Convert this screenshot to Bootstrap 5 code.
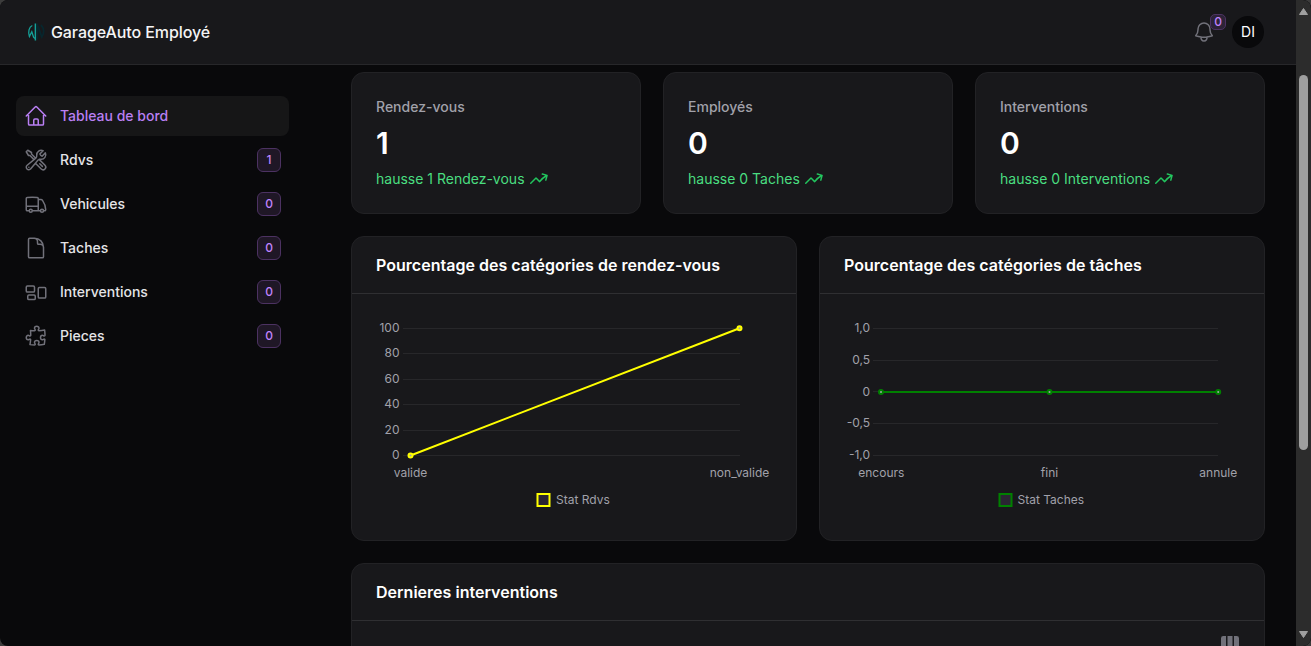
<!DOCTYPE html>
<html lang="fr" data-bs-theme="dark">
<head>
<meta charset="utf-8">
<meta name="viewport" content="width=device-width, initial-scale=1">
<title>Tableau de bord - GarageAuto Employé</title>
<link rel="stylesheet" href="https://cdn.jsdelivr.net/npm/bootstrap@5.3.0/dist/css/bootstrap.min.css">
<style>
  html { background: #3c3c3c; }
  body { font-family: Inter, "Liberation Sans", sans-serif; font-size: 14px; line-height: 20px; background: #3c3c3c; color: #fff; }
  .app-window { background: #09090b; border-radius: 8px; }
  .topbar { height: 65px; background: #18181b; border-bottom: 1px solid #27272a; padding: 0 32px 0 27px; }
  .brand { font-size: 16px; line-height: 24px; font-weight: 500; letter-spacing: -.09px; color: #f4f4f5; gap: 6px; }
  .bell { width: 24px; height: 24px; color: #71717a; margin-right: 16px; }
  .bell-count { position: absolute; left: 18px; top: -6px; width: 16px; height: 16px; border-radius: 5px; font-size: 12px; line-height: 14px; }
  .count { background: #1f1726; border: 1px solid #4c3262; color: #c084fc; font-weight: 500; text-align: center; }
  .bell .count { background: #2d2338; }
  .avatar { width: 32px; height: 32px; background: #09090b; font-weight: 400; }
  .sidebar { width: 351px; padding: 31px 62px 0 16px; }
  .sidebar .nav { gap: 4px; }
  .sidebar .nav-link { height: 40px; padding: 0 8px; gap: 12px; border-radius: 8px; color: #e4e4e7; font-weight: 500; }
  .sidebar .nav-link svg { color: #71717a; }
  .sidebar .nav-link.active { background: #161617; color: #b97ff3; }
  .sidebar .nav-link.active svg { color: #b97ff3; }
  .sidebar .count { width: 24px; height: 24px; border-radius: 6px; font-size: 12px; line-height: 22px; }
  .icon-line { width: 24px; height: 24px; fill: none; stroke: currentColor; stroke-width: 1.5; stroke-linecap: round; stroke-linejoin: round; flex: none; }
  .content { padding: 7px 31px 0 0; gap: 22px; }
  .stack { gap: 22px; }
  .panel { background: #18181b; border: 1px solid #222225; border-radius: 13px; }
  .stat { height: 142px; padding: 24px; }
  .stat-label { color: #a1a1aa; font-weight: 500; }
  .stat-value { font-size: 30px; line-height: 36px; font-weight: 600; letter-spacing: -.75px; }
  .stat-trend { color: #4ade80; gap: 4px; }
  .stat-trend svg { width: 20px; height: 20px; fill: #22c55e; }
  .panel-title { height: 57px; padding: 0 24px; font-size: 16px; line-height: 24px; font-weight: 600; letter-spacing: .02px; border-bottom: 1px solid #2f2f32; }
  .chart-panel { height: 305px; }
  .chart { width: 444px; height: 246px; font-size: 12px; }
  .chart text { fill: #a1a1aa; }
  .chart .end { text-anchor: end; }
  .chart .mid { text-anchor: middle; }
  .grid-lines { stroke: #27272a; stroke-width: 1; shape-rendering: crispEdges; }
  .tools { padding: 12px 24px; color: #71717a; }
  .scroll-track { width: 15px; background: #2c2c2c; border-radius: 0 8px 8px 0; padding: 8px 3px 8px 3px; }
  .scroll-thumb { width: 9px; height: 375px; margin-top: 60px; background: #9f9f9f; border-radius: 5px; }
</style>
<script src="https://cdn.jsdelivr.net/npm/bootstrap@5.3.0/dist/js/bootstrap.bundle.min.js"></script>
</head>
<body class="vh-100 overflow-hidden">
<div class="app-window d-flex vh-100 overflow-hidden">
  <div class="flex-grow-1 d-flex flex-column overflow-hidden">
    <header class="topbar d-flex align-items-center justify-content-between flex-shrink-0">
      <div class="brand d-flex align-items-center">
        <svg width="18" height="18" viewBox="0 0 18 18" fill="none">
          <path d="M5.300 2.500C2 3.800.8 9 2.400 13.600L4.800 8.800L6.600 14.300L8.200 15.500" stroke="#14a098" stroke-width="1.300"/>
          <path d="M8.400.4v17" stroke="#14a098" stroke-width="1.500"/>
          <path d="M10.400.6V16.500M11 3l3.800 11c2.800-4 2.400-9-.9-12" stroke="#07262d" stroke-width="1.800"/>
        </svg>
        <span>GarageAuto Employé</span>
      </div>
      <div class="d-flex align-items-center">
        <div class="bell position-relative">
          <svg class="icon-line d-block" viewBox="0 0 24 24"><path d="M14.857 17.082a23.848 23.848 0 005.454-1.31A8.967 8.967 0 0118 9.750v-.7V9A6 6 0 006 9v.75a8.967 8.967 0 01-2.312 6.022c1.733.64 3.560 1.085 5.455 1.310m5.714 0a24.255 24.255 0 01-5.714 0m5.714 0a3 3 0 11-5.714 0"/></svg>
          <span class="bell-count count">0</span>
        </div>
        <div class="avatar rounded-circle d-flex align-items-center justify-content-center">DI</div>
      </div>
    </header>
    <div class="d-flex flex-grow-1 overflow-hidden">
      <aside class="sidebar flex-shrink-0">
        <nav class="nav flex-column">
          <a class="nav-link active d-flex align-items-center" href="#">
            <svg class="icon-line" viewBox="0 0 24 24"><path d="M2.250 12l8.954-8.955c.44-.439 1.152-.439 1.591 0L21.750 12M4.500 9.750v10.125c0 .621.504 1.125 1.125 1.125H9.750v-4.875c0-.621.504-1.125 1.125-1.125h2.250c.621 0 1.125.504 1.125 1.125V21h4.125c.621 0 1.125-.504 1.125-1.125V9.750M8.250 21h8.250"/></svg>
            <span class="flex-grow-1">Tableau de bord</span>
          </a>
          <a class="nav-link d-flex align-items-center" href="#">
            <svg class="icon-line" viewBox="0 0 24 24"><path d="M11.420 15.170L17.250 21A2.652 2.652 0 0021 17.250l-5.877-5.877M11.420 15.170l2.496-3.030c.317-.384.74-.626 1.208-.766M11.420 15.170l-4.655 5.653a2.548 2.548 0 11-3.586-3.586l6.837-5.630m5.108-.233c.55-.164 1.163-.188 1.743-.14a4.500 4.500 0 004.486-6.336l-3.276 3.277a3.004 3.004 0 01-2.250-2.250l3.276-3.276a4.500 4.500 0 00-6.336 4.486c.091 1.076-.071 2.264-.904 2.950l-.102.085m-1.745 1.437L5.909 7.500H4.500L2.250 3.750l1.500-1.500L7.500 4.500v1.409l4.260 4.260m-1.745 1.437l1.745-1.437m6.615 8.206L15.750 15.750M4.867 19.125h.008v.008h-.008v-.008z"/></svg>
            <span class="flex-grow-1">Rdvs</span><span class="count">1</span>
          </a>
          <a class="nav-link d-flex align-items-center" href="#">
            <svg class="icon-line" viewBox="0 0 24 24"><path d="M8.250 18.750a1.500 1.500 0 01-3 0m3 0a1.500 1.500 0 00-3 0m3 0h6m-9 0H3.375a1.125 1.125 0 01-1.125-1.125V14.250m17.250 4.500a1.500 1.500 0 01-3 0m3 0a1.500 1.500 0 00-3 0m3 0h1.125c.621 0 1.129-.504 1.090-1.124a17.902 17.902 0 00-3.213-9.193 2.056 2.056 0 00-1.580-.86H14.250M16.500 18.750h-2.250m0-11.177v-.958c0-.568-.422-1.048-.987-1.106a48.554 48.554 0 00-10.026 0 1.106 1.106 0 00-.987 1.106v7.635m12-6.677v6.677m0 4.500v-4.500m0 0h-12"/></svg>
            <span class="flex-grow-1">Vehicules</span><span class="count">0</span>
          </a>
          <a class="nav-link d-flex align-items-center" href="#">
            <svg class="icon-line" viewBox="0 0 24 24"><path d="M19.500 14.250v-2.625a3.375 3.375 0 00-3.375-3.375h-1.500A1.125 1.125 0 0113.500 7.125v-1.500a3.375 3.375 0 00-3.375-3.375H8.250m2.250 0H5.625c-.621 0-1.125.504-1.125 1.125v17.250c0 .621.504 1.125 1.125 1.125h12.750c.621 0 1.125-.504 1.125-1.125V11.250a9 9 0 00-9-9z"/></svg>
            <span class="flex-grow-1">Taches</span><span class="count">0</span>
          </a>
          <a class="nav-link d-flex align-items-center" href="#">
            <svg class="icon-line" viewBox="0 0 24 24"><path d="M2.250 7.125C2.250 6.504 2.754 6 3.375 6h6c.621 0 1.125.504 1.125 1.125v3.750c0 .621-.504 1.125-1.125 1.125h-6a1.125 1.125 0 01-1.125-1.125v-3.750zM14.250 8.625c0-.621.504-1.125 1.125-1.125h5.250c.621 0 1.125.504 1.125 1.125v8.250c0 .621-.504 1.125-1.125 1.125h-5.250a1.125 1.125 0 01-1.125-1.125v-8.250zM3.750 16.125c0-.621.504-1.125 1.125-1.125h5.250c.621 0 1.125.504 1.125 1.125v2.250c0 .621-.504 1.125-1.125 1.125h-5.250a1.125 1.125 0 01-1.125-1.125v-2.250z"/></svg>
            <span class="flex-grow-1">Interventions</span><span class="count">0</span>
          </a>
          <a class="nav-link d-flex align-items-center" href="#">
            <svg class="icon-line" viewBox="0 0 24 24"><path d="M14.250 6.087c0-.355.186-.676.401-.959.221-.29.349-.634.349-1.003 0-1.036-1.007-1.875-2.250-1.875s-2.250.84-2.250 1.875c0 .369.128.713.349 1.003.215.283.401.604.401.959v0a.64.64 0 01-.657.643 48.390 48.390 0 01-4.163-.3c.186 1.613.293 3.250.315 4.907a.656.656 0 01-.658.663v0c-.355 0-.676-.186-.959-.401a1.647 1.647 0 00-1.003-.349c-1.036 0-1.875 1.007-1.875 2.250s.84 2.250 1.875 2.250c.369 0 .713-.128 1.003-.349.283-.215.604-.401.959-.401v0c.31 0 .555.26.532.57a48.039 48.039 0 01-.642 5.056c1.518.19 3.058.309 4.616.354a.64.64 0 00.657-.643v0c0-.355-.186-.676-.401-.959a1.647 1.647 0 01-.349-1.003c0-1.035 1.008-1.875 2.250-1.875 1.243 0 2.250.84 2.250 1.875 0 .369-.128.713-.349 1.003-.215.283-.4.604-.4.959v0c0 .333.277.599.61.58a48.100 48.100 0 005.427-.63 48.050 48.050 0 00.582-4.717.532.532 0 00-.533-.57v0c-.355 0-.676.186-.959.401-.29.221-.634.349-1.003.349-1.035 0-1.875-1.007-1.875-2.250s.84-2.250 1.875-2.250c.37 0 .713.128 1.003.349.283.215.604.401.96.401v0a.656.656 0 00.658-.663 48.422 48.422 0 00-.37-5.360c-1.886.342-3.810.574-5.766.689a.578.578 0 01-.61-.58v0z"/></svg>
            <span class="flex-grow-1">Pieces</span><span class="count">0</span>
          </a>
        </nav>
      </aside>
      <main class="content flex-grow-1 d-flex flex-column">
        <svg class="d-none"><symbol id="trend" viewBox="0 0 20 20"><path d="M12.577 4.878a.75.75 0 01.919-.53l4.780 1.281a.75.75 0 01.531.919l-1.281 4.780a.75.75 0 01-1.449-.387l.81-3.022a19.407 19.407 0 00-5.594 5.203.75.75 0 01-1.139.093L7 10.060l-4.720 4.720a.75.75 0 01-1.060-1.061l5.250-5.250a.75.75 0 011.060 0l3.074 3.073a20.923 20.923 0 015.545-4.931l-3.042-.815a.75.75 0 01-.53-.919z"/></symbol></svg>
        <section class="stack d-flex flex-shrink-0">
          <div class="panel stat flex-fill w-100 d-flex flex-column gap-2">
            <div class="stat-label">Rendez-vous</div>
            <div class="stat-value">1</div>
            <div class="stat-trend d-flex align-items-center"><span>hausse 1 Rendez-vous</span><svg><use href="#trend"/></svg></div>
          </div>
          <div class="panel stat flex-fill w-100 d-flex flex-column gap-2">
            <div class="stat-label">Employés</div>
            <div class="stat-value">0</div>
            <div class="stat-trend d-flex align-items-center"><span>hausse 0 Taches</span><svg><use href="#trend"/></svg></div>
          </div>
          <div class="panel stat flex-fill w-100 d-flex flex-column gap-2">
            <div class="stat-label">Interventions</div>
            <div class="stat-value">0</div>
            <div class="stat-trend d-flex align-items-center"><span>hausse 0 Interventions</span><svg><use href="#trend"/></svg></div>
          </div>
        </section>
        <section class="stack d-flex flex-shrink-0">
          <div class="panel chart-panel flex-fill w-100">
            <div class="panel-title d-flex align-items-center">Pourcentage des catégories de rendez-vous</div>
            <svg class="chart d-block" viewBox="0 0 444 246">
              <path class="grid-lines" d="M51 34.500H388M51 59.500H388M51 85.500H388M51 110.500H388M51 136.500H388M51 161.500H388"/>
              <g class="end"><text x="47.500" y="38">100</text><text x="47.500" y="63">80</text><text x="47.500" y="89">60</text><text x="47.500" y="114">40</text><text x="47.500" y="140">20</text><text x="47.500" y="165">0</text></g>
              <g class="mid"><text x="58.500" y="183">valide</text><text x="387.500" y="183">non_valide</text></g>
              <path d="M58.500 161.500L387.500 34.200" stroke="#ff0" stroke-width="2"/>
              <g fill="#a1a1aa" stroke="#ff0" stroke-width="2"><circle cx="58.500" cy="161.500" r="2"/><circle cx="387.500" cy="34.200" r="2"/></g>
              <rect x="185.500" y="200" width="12" height="12" fill="#2a2433" stroke="#ff0" stroke-width="2"/>
              <text x="204" y="210">Stat Rdvs</text>
            </svg>
          </div>
          <div class="panel chart-panel flex-fill w-100">
            <div class="panel-title d-flex align-items-center">Pourcentage des catégories de tâches</div>
            <svg class="chart d-block" viewBox="0 0 444 246">
              <path class="grid-lines" d="M53 34.500H398M53 66.500H398M53 97.500H398M53 129.500H398M53 161.500H398"/>
              <g class="end"><text x="50" y="38">1,0</text><text x="50" y="70">0,5</text><text x="50" y="102">0</text><text x="50" y="133">-0,5</text><text x="50" y="165">-1,0</text></g>
              <g class="mid"><text x="61.300" y="183">encours</text><text x="229.500" y="183">fini</text><text x="398.300" y="183">annule</text></g>
              <path d="M61 98H398" stroke="#008000" stroke-width="2"/>
              <g fill="#a1a1aa" stroke="#008000" stroke-width="2"><circle cx="61" cy="98" r="2"/><circle cx="229.500" cy="98" r="2"/><circle cx="398.200" cy="98" r="2"/></g>
              <rect x="179.500" y="200" width="12" height="12" fill="#2a2433" stroke="#008000" stroke-width="2"/>
              <text x="197.500" y="210">Stat Taches</text>
            </svg>
          </div>
        </section>
        <section class="panel flex-shrink-0">
          <div class="panel-title d-flex align-items-center">Dernieres interventions</div>
          <div class="tools d-flex justify-content-end">
            <svg width="20" height="20" viewBox="0 0 20 20" fill="currentColor"><path d="M14 17h2.750A2.250 2.250 0 0019 14.750v-9.500A2.250 2.250 0 0016.750 3H14v14zM12.500 3h-5v14h5V3zM3.250 3H6v14H3.250A2.250 2.250 0 011 14.750v-9.500A2.250 2.250 0 013.250 3z"/></svg>
          </div>
        </section>
      </main>
    </div>
  </div>
  <div class="scroll-track d-flex flex-column justify-content-between flex-shrink-0">
    <div>
      <svg class="d-block" width="9" height="7" viewBox="0 0 9 7"><path d="M4.500 .5L8.500 6.500H.5z" fill="#9f9f9f" stroke="#9f9f9f" stroke-linejoin="round"/></svg>
      <div class="scroll-thumb"></div>
    </div>
    <svg class="d-block" width="9" height="7" viewBox="0 0 9 7"><path d="M4.500 6.500L8.500 .5H.5z" fill="#9f9f9f" stroke="#9f9f9f" stroke-linejoin="round"/></svg>
  </div>
</div>
</body>
</html>
